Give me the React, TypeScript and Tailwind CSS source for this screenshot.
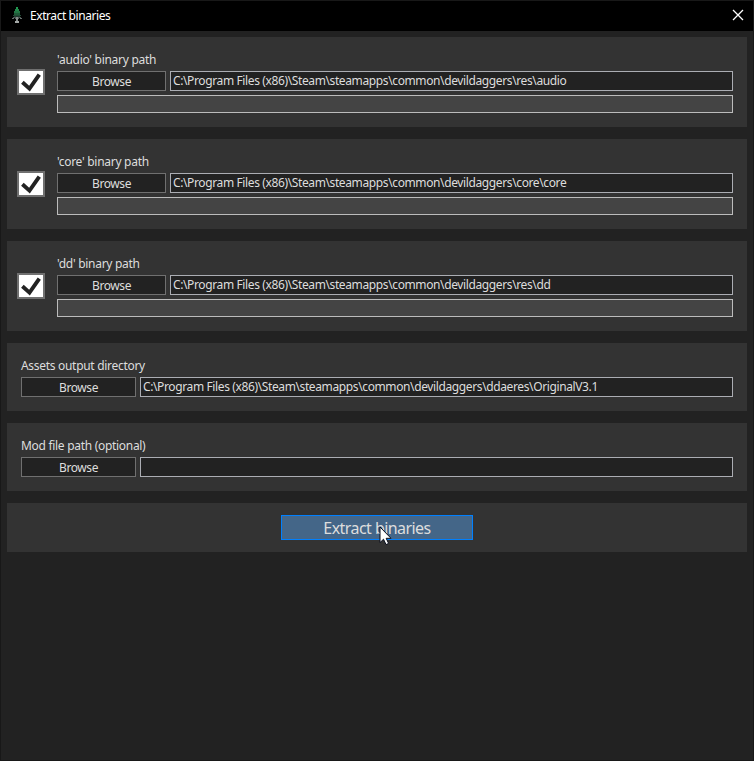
import React from "react";

const STEAM = "C:\\Program Files (x86)\\Steam\\steamapps\\common\\devildaggers\\";

function TreeIcon() {
  return (
    <svg width="12" height="18" viewBox="0 0 12 18" className="block" shapeRendering="crispEdges">
      <rect x="5" y="0" width="2" height="2" fill="#1f9a50" />
      <rect x="4" y="2" width="4" height="2" fill="#23874a" />
      <rect x="3" y="4" width="6" height="2" fill="#237544" />
      <rect x="3" y="6" width="6" height="2" fill="#205a39" />
      <rect x="2" y="8" width="8" height="1" fill="#1e4a33" />
      <rect x="3" y="9" width="6" height="1" fill="#22382f" />
      <rect x="2" y="10" width="3" height="1" fill="#4f5a57" />
      <rect x="7" y="10" width="3" height="1" fill="#4f5a57" />
      <rect x="1" y="11" width="2" height="1" fill="#66706d" />
      <rect x="9" y="11" width="2" height="1" fill="#66706d" />
      <rect x="4" y="11" width="4" height="1" fill="#59635f" />
      <rect x="5" y="10" width="2" height="5" fill="#848b89" />
      <rect x="4" y="14" width="4" height="2" fill="#a5a9a8" />
    </svg>
  );
}

function Browse({ className }: { className: string }) {
  return (
    <button
      className={`h-5 shrink-0 border border-[#707070] bg-[#222] pt-px text-center leading-[18px] tracking-[-0.42px] ${className}`}
    >
      Browse
    </button>
  );
}

function PathBox({ value }: { value: string }) {
  return (
    <div className="h-5 flex-1 overflow-hidden whitespace-nowrap border border-[#abadb3] bg-[#222] pl-[2px] leading-[17px] tracking-[-0.38px]">
      {value}
    </div>
  );
}

function BinaryPanel({ name, path }: { name: string; path: string }) {
  return (
    <section className="flex h-[90px] bg-[#333] pl-[10px] pr-[14px]">
      <div className="mt-8 h-[26px] w-7 shrink-0 border-2 border-[#707070] bg-white">
        <svg width="24" height="22" viewBox="0 0 24 22" className="block">
          <path d="M3.4 11.3 L10.5 17.6 L20.3 3.7" fill="none" stroke="#222" strokeWidth="3.9" />
        </svg>
      </div>
      <div className="ml-3 flex-1 pt-[14px]">
        <div className="h-5 leading-[18px] tracking-[-0.28px]">{`'${name}' binary path`}</div>
        <div className="flex gap-1">
          <Browse className="w-[109px]" />
          <PathBox value={path} />
        </div>
        <div className="mt-1 h-[18px] border border-[#bcbcbc] bg-[#444]" />
      </div>
    </section>
  );
}

function PathPanel({ label, path }: { label: string; path: string }) {
  return (
    <section className="h-[68px] bg-[#333] px-[14px] pt-[14px]">
      <div className="h-5 leading-[18px] tracking-[-0.3px]">{label}</div>
      <div className="flex gap-1">
        <Browse className="w-[115px]" />
        <PathBox value={path} />
      </div>
    </section>
  );
}

export default function App() {
  return (
    <div className="flex h-[761px] w-[754px] flex-col border border-[#181818] bg-[#222] font-['Noto_Sans',sans-serif] text-[12px] text-[#ddd]">
      <header className="flex h-[30px] shrink-0 items-center bg-black pl-[10px] pr-[9px] text-white">
        <TreeIcon />
        <span className="ml-[7px] flex-1 leading-[18px] tracking-[-0.43px]">Extract binaries</span>
        <svg width="12" height="12" viewBox="0 0 12 12" className="-mt-0.5 block">
          <path d="M1 1 L11 11 M11 1 L1 11" stroke="#fff" strokeWidth="1.3" />
        </svg>
      </header>
      <main className="flex flex-col gap-3 px-[6px] pt-[6px]">
        <BinaryPanel name="audio" path={STEAM + "res\\audio"} />
        <BinaryPanel name="core" path={STEAM + "core\\core"} />
        <BinaryPanel name="dd" path={STEAM + "res\\dd"} />
        <PathPanel label="Assets output directory" path={STEAM + "ddaeres\\OriginalV3.1"} />
        <PathPanel label="Mod file path (optional)" path="" />
        <section className="flex h-[49px] justify-center bg-[#333] pt-3">
          <div className="relative h-[25px] w-48">
            <button className="h-full w-full border border-[#0080ff] bg-[#446688] pt-px text-[16px] leading-[23px] tracking-[-0.56px]">
              Extract binaries
            </button>
            <svg width="13" height="20" viewBox="0 0 13 20" className="absolute left-[98px] top-[11px]">
              <path
                d="M1 1 V16.6 L4.5 13.2 L7 18.6 L9.6 17.4 L7.2 12.3 H12 Z"
                fill="#fff"
                stroke="#0a0f1e"
                strokeWidth="1"
              />
            </svg>
          </div>
        </section>
      </main>
    </div>
  );
}
